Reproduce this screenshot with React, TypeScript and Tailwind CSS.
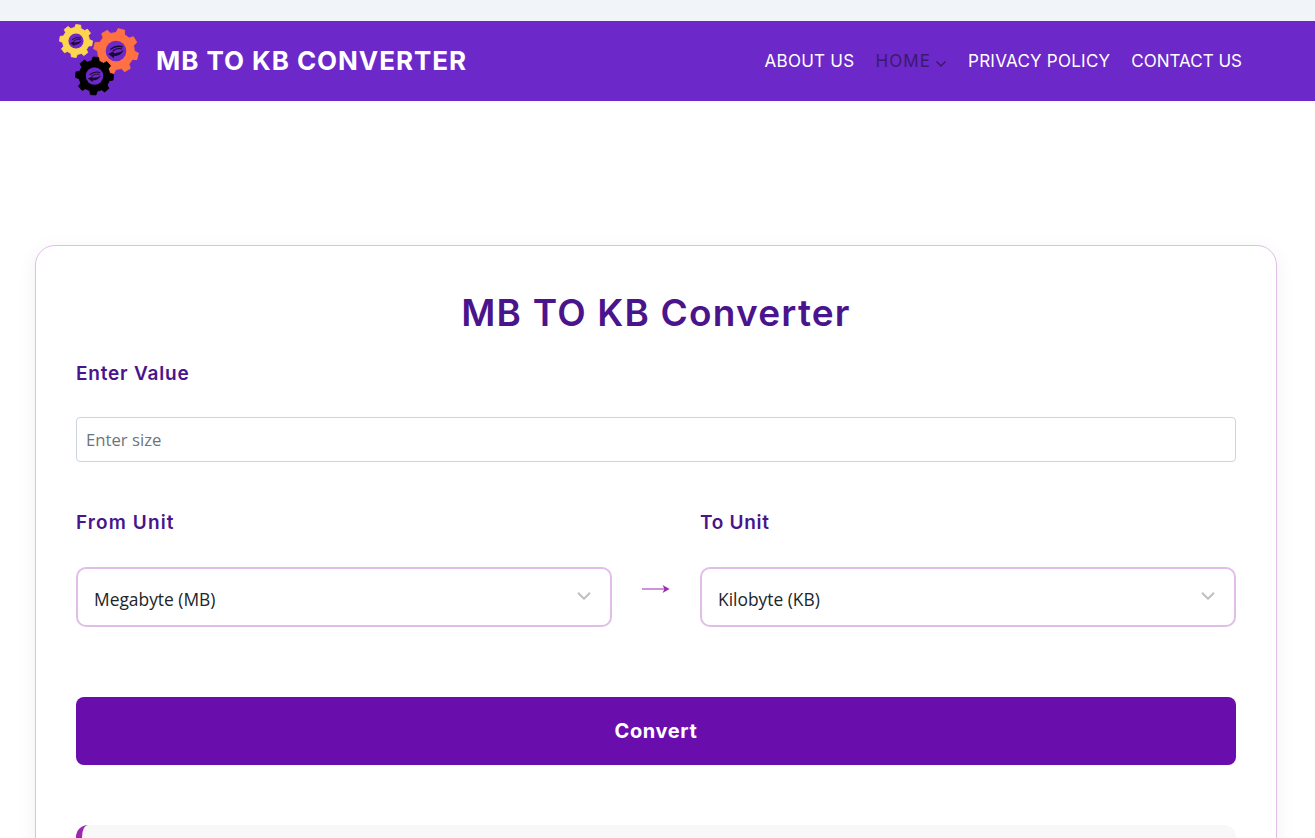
import { ChevronDown } from "lucide-react";

const headingFont = "font-['Inter','Liberation_Sans',sans-serif]";
const bodyFont = "font-['Open_Sans','Noto_Sans',sans-serif]";

function gearPath(cx: number, cy: number, outer: number, inner: number, teeth: number) {
  const step = (Math.PI * 2) / teeth;
  const pts: string[] = [];
  for (let i = 0; i < teeth; i++) {
    const a = i * step;
    const corners: [number, number][] = [
      [inner, a - step * 0.3],
      [outer, a - step * 0.19],
      [outer, a + step * 0.19],
      [inner, a + step * 0.3],
    ];
    corners.forEach(([r, t]) => {
      pts.push(`${(cx + r * Math.cos(t)).toFixed(2)} ${(cy + r * Math.sin(t)).toFixed(2)}`);
    });
  }
  return "M" + pts.join("L") + "Z";
}

function Gear({ cx, cy, r, color, rotate }: { cx: number; cy: number; r: number; color: string; rotate: number }) {
  const hole = r * 0.46;
  return (
    <g>
      <path
        d={gearPath(cx, cy, r, r * 0.82, 8)}
        transform={`rotate(${rotate} ${cx} ${cy})`}
        fill={color}
        stroke={color}
        strokeWidth="0.8"
        strokeLinejoin="round"
      />
      <circle cx={cx} cy={cy} r={hole} fill="#6d28c9" />
      {/* swoosh + left arrow inside the hub */}
      <g transform={`translate(${cx} ${cy}) scale(${hole})`} fill="#1a0a2e">
        <path d="M-0.75 0.3L-0.2 0L-0.25 0.2Q0.3 0.25 0.75 -0.1Q0.45 0.5 -0.2 0.5L-0.2 0.7Z" />
        <path d="M-0.55 -0.15Q0 -0.6 0.65 -0.4" fill="none" stroke="#1a0a2e" strokeWidth="0.13" />
        <path d="M-0.3 -0.02Q0.15 -0.32 0.6 -0.2" fill="none" stroke="#1a0a2e" strokeWidth="0.1" />
      </g>
    </g>
  );
}

function Logo() {
  return (
    <svg width="82" height="76" viewBox="0 0 82 76" className="shrink-0">
      <Gear cx={18} cy={18} r={16.5} color="#ffd54f" rotate={8} />
      <Gear cx={58} cy={28} r={22.5} color="#ff7043" rotate={14} />
      <Gear cx={36.5} cy={53} r={19} color="#000000" rotate={4} />
    </svg>
  );
}

function UnitSelect({ label }: { label: string }) {
  return (
    <div className={`flex h-[60px] items-center justify-between rounded-[10px] border-2 border-[#e1bee7] bg-white pl-4 pr-[15px] ${bodyFont}`}>
      <span className="mt-[4px] text-[17.4px] text-[#212529]">{label}</span>
      <ChevronDown size={22} strokeWidth={2} className="mb-[3px] text-[#bdbdbd]" />
    </div>
  );
}

export default function App() {
  return (
    <div className="h-[838px] overflow-hidden bg-white">
      <div className="h-[21px] bg-[#f1f4f8]" />
      <header className={`flex h-20 items-center justify-between bg-[#6d28c9] pl-[58px] pr-[73px] ${headingFont}`}>
        <div className="flex items-center gap-4">
          <Logo />
          <span className="mb-[2px] text-[26px] font-bold tracking-[0.95px] text-white">MB TO KB CONVERTER</span>
        </div>
        <nav className="mt-[2px] flex items-center gap-[21px] text-[17px] text-white">
          <a className="tracking-[0.25px]">ABOUT US</a>
          <a className="flex items-center gap-[2px] tracking-[1.1px] text-[#3b1a6e]">
            HOME
            <ChevronDown size={16} strokeWidth={2.5} className="mt-[3px] -mr-[2px]" />
          </a>
          <a className="tracking-[0.25px]">PRIVACY POLICY</a>
          <a>CONTACT US</a>
        </nav>
      </header>

      <main className="pl-[35px] pr-[38px] pt-[144px]">
        <div className="rounded-t-[20px] border border-[#e1bee7] bg-white px-10 pt-[42px] shadow-[0_4px_20px_rgba(0,0,0,0.06)]">
          <h1 className={`text-center text-[37px] leading-[50px] font-semibold tracking-[1.2px] text-[#4a148c] ${headingFont}`}>
            MB TO KB Converter
          </h1>
          <label className={`mt-[21px] block text-[19px] leading-[30px] font-semibold tracking-[0.8px] text-[#4a148c] ${headingFont}`}>
            Enter Value
          </label>
          <input
            placeholder="Enter size"
            className={`mt-[28px] block h-[45px] w-full rounded-[4px] border border-[#ced4da] px-[9px] text-[16.7px] placeholder:text-[#6c757d] ${bodyFont}`}
          />

          <div className="mt-[46px] grid grid-cols-[536px_88px_1fr] items-end">
            <div>
              <label className={`block text-[19px] leading-[30px] font-semibold tracking-[1.1px] text-[#4a148c] ${headingFont}`}>
                From Unit
              </label>
              <div className="mt-[29px]">
                <UnitSelect label="Megabyte (MB)" />
              </div>
            </div>
            <div className="flex h-[60px] items-center justify-center pb-[16px]">
              <svg width="28" height="10" viewBox="0 0 28 10" className="-ml-px text-[#9c27b0]">
                <path d="M0 5H26" stroke="currentColor" strokeWidth="1" />
                <path d="M20.5 1L27.5 5L20.5 9L22.5 5Z" fill="currentColor" />
              </svg>
            </div>
            <div>
              <label className={`block text-[19px] leading-[30px] font-semibold tracking-[0.7px] text-[#4a148c] ${headingFont}`}>
                To Unit
              </label>
              <div className="mt-[29px]">
                <UnitSelect label="Kilobyte (KB)" />
              </div>
            </div>
          </div>

          <button className={`mt-[70px] block h-[68px] w-full rounded-lg bg-[#6a0dad] text-xl font-bold tracking-[0.6px] text-white ${headingFont}`}>
            Convert
          </button>

          <div className="mt-[60px] h-20 rounded-xl border-l-[6px] border-[#9c27b0] bg-[#f8f8f8]" />
        </div>
      </main>
    </div>
  );
}
